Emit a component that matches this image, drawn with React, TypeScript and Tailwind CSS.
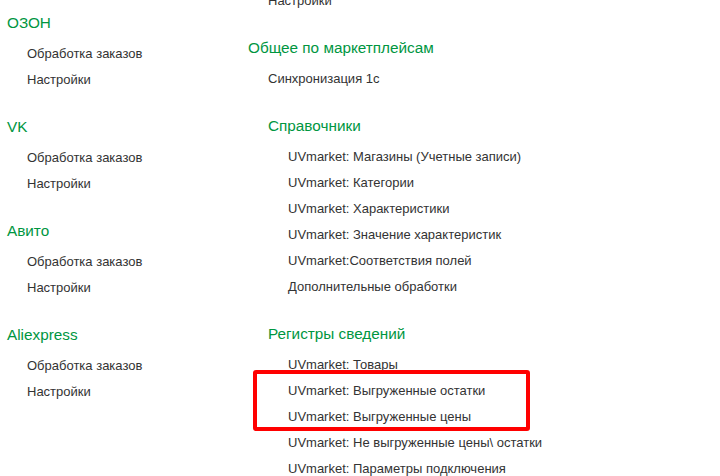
import React from 'react';

type Group = {
    title: string;
    items: string[];
    children?: Group[];
};

const left: Group[] = [
    { title: 'ОЗОН', items: ['Обработка заказов', 'Настройки'] },
    { title: 'VK', items: ['Обработка заказов', 'Настройки'] },
    { title: 'Авито', items: ['Обработка заказов', 'Настройки'] },
    { title: 'Aliexpress', items: ['Обработка заказов', 'Настройки'] },
];

const general: Group = {
    title: 'Общее по маркетплейсам',
    items: ['Синхронизация 1с'],
    children: [
        {
            title: 'Справочники',
            items: [
                'UVmarket: Магазины (Учетные записи)',
                'UVmarket: Категории',
                'UVmarket: Характеристики',
                'UVmarket: Значение характеристик',
                'UVmarket:Соответствия полей',
                'Дополнительные обработки',
            ],
        },
        {
            title: 'Регистры сведений',
            items: [
                'UVmarket: Товары',
                'UVmarket: Выгруженные остатки',
                'UVmarket: Выгруженные цены',
                'UVmarket: Не выгруженные цены\\ остатки',
                'UVmarket: Параметры подключения',
            ],
        },
    ],
};

function Item({ label }: { label: string }) {
    return (
        <div className="h-[26px] pl-[20px] flex items-center text-[13px] text-[#333333] whitespace-nowrap">
            {label}
        </div>
    );
}

function Section({ group }: { group: Group }) {
    return (
        <div className="flex flex-col">
            <div className="h-[26px] flex items-center text-[15.3px] text-[#00963f] whitespace-nowrap">{group.title}</div>
            <div className="mt-[5px] flex flex-col">
                {group.items.map((it, i) => (
                    <Item key={i} label={it} />
                ))}
            </div>
            {group.children && (
                <div className="pl-[20px] mt-[21px] flex flex-col gap-[21px]">
                    {group.children.map((g) => (
                        <Section key={g.title} group={g} />
                    ))}
                </div>
            )}
        </div>
    );
}

export default function App() {
    return (
        <div
            className="relative w-[720px] h-[476px] overflow-hidden bg-white flex items-start"
            style={{ fontFamily: '"Liberation Sans", Arial, sans-serif' }}
        >
            {/* left column: marketplaces */}
            <div className="w-[248px] shrink-0 pl-[7px] pt-[10px] flex flex-col gap-[21px]">
                {left.map((g) => (
                    <Section key={g.title} group={g} />
                ))}
            </div>

            {/* right column, scrolled a little */}
            <div className="-mt-[12px] flex flex-col">
                <Item label="Настройки" />
                <div className="mt-[21px]">
                    <Section group={general} />
                </div>
            </div>

            {/* highlight frame */}
            <div className="absolute left-[253px] top-[370px] w-[277px] h-[61px] border-4 border-[#ff0000] rounded-[3px]" />
        </div>
    );
}
